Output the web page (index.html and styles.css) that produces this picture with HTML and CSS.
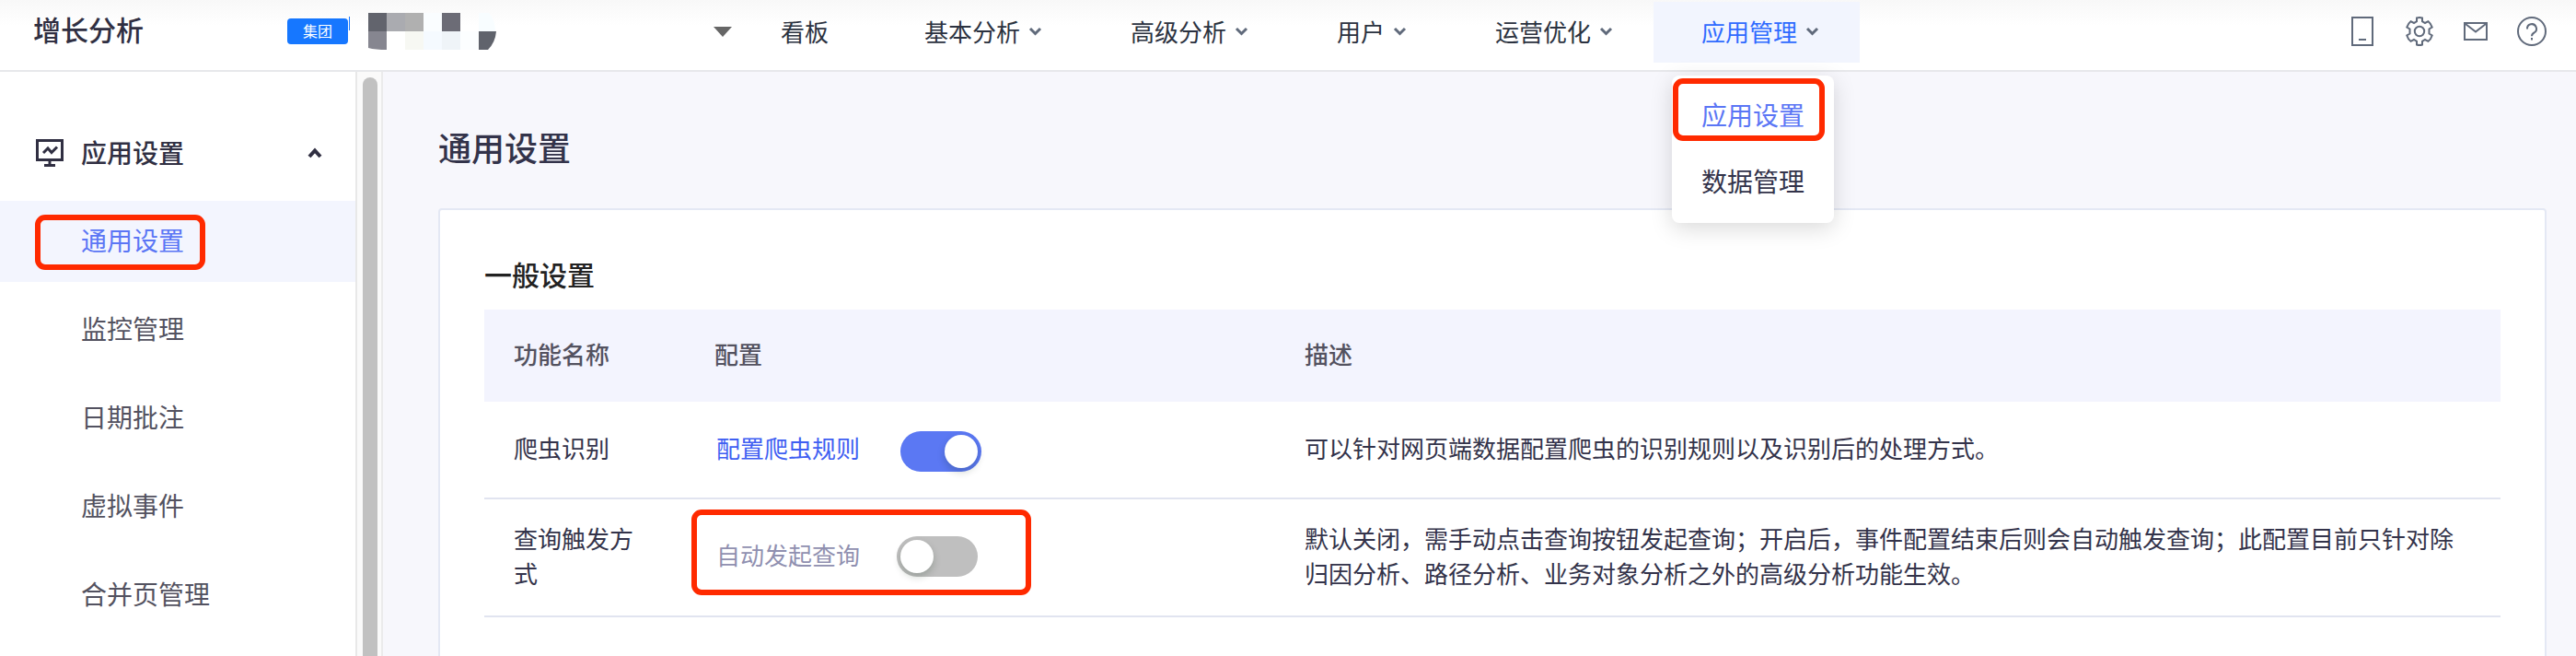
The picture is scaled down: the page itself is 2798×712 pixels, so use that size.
FILE: index.html
```html
<!DOCTYPE html>
<html lang="zh-CN">
<head>
    <meta charset="UTF-8">
    <meta name="viewport" content="width=device-width, initial-scale=1.0">
    <title>增长分析 - 通用设置</title>
    <link rel="stylesheet" href="styles.css">
</head>
<body>
    <header class="header">
        <div class="brand">增长分析</div>
        <div class="project">
            <span class="tag">集团</span>
            <svg class="project-name" width="162" height="40" viewBox="0 0 162 40">
                <path d="M0 4h1v15H0z" fill="#1677ff"/>
                <path d="M21 0h20v20H21z" fill="#62646d"/>
                <path d="M41 0h20v20H41z" fill="#aaabb0"/>
                <path d="M61 0h20v20H61z" fill="#b0b0b0"/>
                <path d="M81 0h20v20H81z" fill="#fafdff"/>
                <path d="M101 0h20v20h-20z" fill="#6c6c76"/>
                <path d="M141 0h11q7 8 7 20h-18z" fill="#f8fdff"/>
                <path d="M21 20h20v20q-12 0-20-2z" fill="#868690"/>
                <path d="M61 20h20v20H61z" fill="#f7f8f3"/>
                <path d="M81 20h20v20H81z" fill="#f5faff"/>
                <path d="M101 20h20v20h-20z" fill="#eff4f8"/>
                <path d="M121 20h20v20h-20z" fill="#fcfeff"/>
                <path d="M141 20h19q-1 12-9 20h-10z" fill="#60636c"/>
            </svg>
            <span class="caret"></span>
        </div>
        <nav class="nav">
            <a class="nav-item plain">看板</a>
            <a class="nav-item">基本分析<svg class="arrow" viewBox="0 0 15 10"><path d="M2 2l5.5 5.5L13 2"/></svg></a>
            <a class="nav-item">高级分析<svg class="arrow" viewBox="0 0 15 10"><path d="M2 2l5.5 5.5L13 2"/></svg></a>
            <a class="nav-item">用户<svg class="arrow" viewBox="0 0 15 10"><path d="M2 2l5.5 5.5L13 2"/></svg></a>
            <a class="nav-item">运营优化<svg class="arrow" viewBox="0 0 15 10"><path d="M2 2l5.5 5.5L13 2"/></svg></a>
            <div class="nav-item active">应用管理<svg class="arrow" viewBox="0 0 15 10"><path d="M2 2l5.5 5.5L13 2"/></svg>
                <div class="dropdown">
                    <a class="selected">应用设置</a>
                    <a>数据管理</a>
                    <span class="mark mark-menu"></span>
                </div>
            </div>
        </nav>
        <div class="tools">
            <svg width="24" height="32" viewBox="0 0 24 32"><path d="M1 1h22v30H1zM8 25h8"/></svg>
            <svg class="gear" width="30" height="32" viewBox="0 0 30 32"><path d="M12 1.500Q15 .5 18 1.500V5.200L21 7L24.500 5.200Q27.500 7.500 28.700 11.500L25.500 13.500V18.500L28.700 20.500Q27.500 24.500 24.500 26.800L21 25L18 26.800V30.500Q15 31.500 12 30.500V26.800L9 25L5.500 26.800Q2.500 24.500 1.300 20.500L4.500 18.500V13.500L1.300 11.500Q2.500 7.500 5.500 5.200L9 7L12 5.200Z"/><circle cx="15" cy="16" r="5.200"/></svg>
            <svg width="26" height="20" viewBox="0 0 26 20"><path d="M1 1h24v18H1zM2 2l11 8.500L24 2"/></svg>
            <svg width="32" height="32" viewBox="0 0 32 32"><circle cx="16" cy="16" r="15"/><path d="M11 13.500a5 5 0 1 1 7.500 4Q16 18.800 16 21.200M16 23v2.500"/></svg>
        </div>
    </header>

    <div class="layout">
        <aside class="sidebar">
            <div class="group">
                <svg class="group-icon" width="30" height="30" viewBox="0 0 30 30"><path d="M1.500 1.500h27v21h-27zM15 23v5M9 28.500h12M8 15l5-5 4 4.500 6-6"/></svg>
                <span>应用设置</span>
                <svg class="group-arrow" width="16" height="12" viewBox="0 0 16 12"><path d="M2 10l6-6.500L14 10"/></svg>
            </div>
            <ul class="menu">
                <li class="current">通用设置<span class="mark mark-side"></span></li>
                <li>监控管理</li>
                <li>日期批注</li>
                <li>虚拟事件</li>
                <li>合并页管理</li>
            </ul>
        </aside>
        <div class="scrollbar"><div class="thumb"></div></div>

        <main class="main">
            <h1>通用设置</h1>
            <section class="card">
                <h2>一般设置</h2>
                <div class="row head">
                    <div>功能名称</div>
                    <div>配置</div>
                    <div>描述</div>
                </div>
                <div class="row crawler">
                    <div>爬虫识别</div>
                    <div class="config">
                        <a class="link">配置爬虫规则</a>
                        <span class="switch on"></span>
                    </div>
                    <div>可以针对网页端数据配置爬虫的识别规则以及识别后的处理方式。</div>
                </div>
                <div class="row query">
                    <div>查询触发方式</div>
                    <div class="config">
                        <span class="muted">自动发起查询</span>
                        <span class="switch"></span>
                        <span class="mark mark-query"></span>
                    </div>
                    <div>默认关闭，需手动点击查询按钮发起查询；开启后，事件配置结束后则会自动触发查询；此配置目前只针对除归因分析、路径分析、业务对象分析之外的高级分析功能生效。</div>
                </div>
            </section>
        </main>
    </div>
</body>
</html>
```
FILE: styles.css
```css
* { box-sizing: border-box; }
body { margin: 0; height: 712px; overflow: hidden; font-family: "Noto Sans CJK SC", sans-serif; font-size: 26px; color: #33334a; background: #f7f7fc; }
svg { display: block; flex: none; fill: none; }
h1, h2 { margin: 0; font-weight: 500; }

/* header */
.header { display: flex; height: 78px; border-bottom: 2px solid #e7e8eb; background: linear-gradient(#f8f8f8, #fff 28px); }
.brand { width: 312px; padding-left: 36px; font-size: 30px; line-height: 63px; font-weight: 500; color: #302f42; }
.project { display: flex; width: 484px; padding-top: 14px; }
.tag { width: 66px; height: 28px; margin: 6px 1px 0 0; border-radius: 4px; background: #1677ff; color: #fff; font-size: 16px; line-height: 27px; text-align: center; }
.caret { width: 20px; height: 11px; margin: 15px 0 0 234px; background: #666; clip-path: polygon(0 0, 100% 0, 50% 100%); }
.nav { display: flex; padding-top: 2px; }
.nav-item { position: relative; display: flex; align-items: center; height: 66px; padding: 0 44px 4px 52px; color: #2b3240; white-space: nowrap; }
.nav-item.plain { padding-right: 52px; }
.nav-item.active { background: #f2f5fe; color: #2f6bff; }
.arrow { width: 15px; height: 10px; margin: 2px 0 0 9px; stroke: #606a7b; stroke-width: 3; }
.dropdown { position: absolute; left: 20px; top: 80px; z-index: 2; width: 176px; height: 160px; padding: 6px 0 0 32px; border-radius: 8px; background: #fff; box-shadow: 0 6px 24px rgba(0, 0, 0, .15); font-size: 28px; line-height: 72px; color: #33334a; }
.dropdown a { display: block; }
.dropdown .selected { color: #5b76f5; }
.tools { display: flex; align-items: center; height: 68px; margin-left: auto; padding-right: 32px; stroke: #606a7b; stroke-width: 2; }
.tools svg { margin-left: 32px; }
.tools .gear { margin: 0 1px 0 35px; }

/* sidebar */
.layout { display: flex; height: 634px; }
.sidebar { width: 388px; padding-top: 52px; border-right: 2px solid #e8e8e8; background: #fff; font-size: 28px; }
.group { display: flex; align-items: center; height: 72px; padding: 0 36px 0 39px; font-weight: 500; color: #302f42; }
.group span { margin-top: -3px; }
.group-icon { margin-right: 19px; stroke: #302f42; stroke-width: 3; }
.group-arrow { margin-left: auto; stroke: #302f42; stroke-width: 4; }
.menu { margin: 16px 0 0; padding: 0; list-style: none; }
.menu li { position: relative; height: 88px; margin-bottom: 8px; padding-left: 88px; line-height: 85px; color: #535260; }
.menu .current { background: #f3f5fe; color: #5b76f5; }
.scrollbar { width: 28px; padding: 6px 0 0 6px; border-right: 2px solid #ebebeb; background: #fafafa; }
.thumb { width: 16px; height: 640px; border-radius: 8px; background: #c1c1c1; }

/* content */
.main { flex: 1; padding: 57px 32px 0 60px; }
h1 { height: 91px; font-size: 36px; line-height: 49px; color: #33334a; }
.card { height: 520px; padding: 48px 48px 0; border: 2px solid #e4e8f4; border-radius: 4px; background: #fff; }
h2 { height: 60px; font-size: 30px; line-height: 42px; color: #222; }
.row { display: grid; grid-template-columns: 218px 641px 1fr; align-items: center; padding-left: 32px; border-bottom: 2px solid #e1e4f0; line-height: 38px; }
.row > div { margin-top: -4px; }
.row > div:first-child { padding-right: 70px; }
.row > div:last-child { padding-right: 50px; }
.head { height: 100px; border: 0; background: #f3f4fe; font-weight: 500; color: #535260; }
.crawler { height: 106px; }
.query { height: 128px; }
.row .config { position: relative; display: flex; align-items: center; margin-top: -2px; padding-left: 2px; }
.crawler .config { margin-top: 4px; }
.link { width: 200px; margin-top: -8px; color: #3f5ff2; }
.muted { width: 196px; margin-top: -5px; color: #9090b0; }
.switch { width: 88px; height: 44px; padding: 4px; border-radius: 22px; background: #bfbfbf; }
.switch::before { content: ""; display: block; width: 36px; height: 36px; border-radius: 50%; background: #fff; box-shadow: 0 4px 8px rgba(0, 35, 11, .2); }
.switch.on { background: #5b78f3; }
.switch.on::before { margin-left: 44px; }

/* red highlight frames */
.mark { position: absolute; border: 6px solid #ff2a00; border-radius: 11px; }
.mark-menu { left: 1px; top: 3px; width: 165px; height: 68px; }
.mark-side { left: 38px; top: 15px; width: 185px; height: 60px; }
.mark-query { left: -25px; top: -29px; width: 369px; height: 93px; }
```
